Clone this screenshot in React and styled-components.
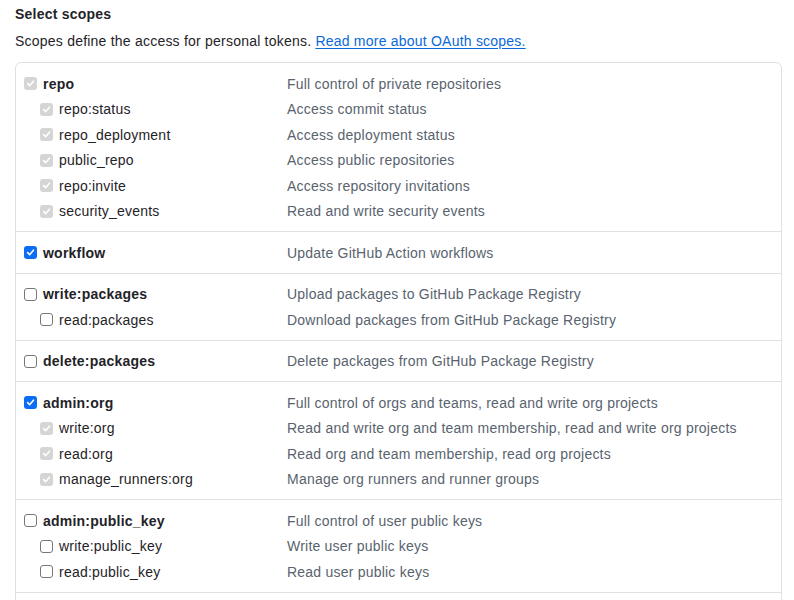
import React from "react";
import styled, { createGlobalStyle } from "styled-components";

const scopes = [
  {
    name: "repo",
    desc: "Full control of private repositories",
    state: "disabled",
    children: [
      ["repo:status", "Access commit status"],
      ["repo_deployment", "Access deployment status"],
      ["public_repo", "Access public repositories"],
      ["repo:invite", "Access repository invitations"],
      ["security_events", "Read and write security events"],
    ],
    childState: "disabled",
  },
  { name: "workflow", desc: "Update GitHub Action workflows", state: "checked", children: [] },
  {
    name: "write:packages",
    desc: "Upload packages to GitHub Package Registry",
    state: "off",
    children: [["read:packages", "Download packages from GitHub Package Registry"]],
    childState: "off",
  },
  { name: "delete:packages", desc: "Delete packages from GitHub Package Registry", state: "off", children: [] },
  {
    name: "admin:org",
    desc: "Full control of orgs and teams, read and write org projects",
    state: "checked",
    children: [
      ["write:org", "Read and write org and team membership, read and write org projects"],
      ["read:org", "Read org and team membership, read org projects"],
      ["manage_runners:org", "Manage org runners and runner groups"],
    ],
    childState: "disabled",
  },
  {
    name: "admin:public_key",
    desc: "Full control of user public keys",
    state: "off",
    children: [
      ["write:public_key", "Write user public keys"],
      ["read:public_key", "Read user public keys"],
    ],
    childState: "off",
  },
];

function Check({ state }) {
  return (
    <Box $state={state}>
      {state !== "off" && (
        <svg width="9" height="9" viewBox="0 0 10 10">
          <path d="M1.8 5.2 L4 7.4 L8.3 2.4" fill="none" stroke="#fff" strokeWidth="1.8" strokeLinecap="round" strokeLinejoin="round" />
        </svg>
      )}
    </Box>
  );
}

export default function App() {
  return (
    <Page>
      <GlobalStyle />
      <Heading>Select scopes</Heading>
      <Intro>
        Scopes define the access for personal tokens. <Link href="#">Read more about OAuth scopes.</Link>
      </Intro>
      <Table>
        {scopes.map((s) => (
          <Group key={s.name}>
            <Row>
              <Name $top>
                <Check state={s.state} />
                {s.name}
              </Name>
              <Desc>{s.desc}</Desc>
            </Row>
            {s.children.map(([n, d]) => (
              <Row key={n}>
                <Name $child>
                  <Check state={s.childState} />
                  {n}
                </Name>
                <Desc>{d}</Desc>
              </Row>
            ))}
          </Group>
        ))}
        {/* next group continues below the fold */}
        <Group />
      </Table>
    </Page>
  );
}

const GlobalStyle = createGlobalStyle`
  body {
    margin: 0;
    background: #fff;
    font-family: "Liberation Sans", Arial, sans-serif;
    font-size: 14px;
    letter-spacing: 0.22px;
    color: #1f2328;
  }
`;

const Page = styled.div`
  padding: 4px 12px 0 15px;
  height: 600px;
  overflow: hidden;
  box-sizing: border-box;
`;

const Heading = styled.div`
  font-weight: 700;
  font-size: 14px;
  line-height: 21px;
  margin-bottom: 6px;
`;

const Intro = styled.div`
  line-height: 21px;
  color: #1f2328;
  margin-bottom: 10px;
`;

const Link = styled.a`
  color: #0969da;
  text-decoration: underline;
  text-underline-offset: 2px;
`;

const Table = styled.div`
  border: 1px solid #dde1e6;
  border-radius: 6px;
`;

const Group = styled.div`
  padding: 7.5px 0;
  min-height: 20px;
  & + & {
    border-top: 1px solid #dde1e6;
  }
`;

const Row = styled.div`
  display: grid;
  grid-template-columns: 271px 1fr;
  box-sizing: border-box;
  height: 25.5px;
  align-items: center;
  padding-top: 1px;
`;

const Name = styled.div`
  display: flex;
  align-items: center;
  padding-left: ${(p) => (p.$child ? 24 : 8)}px;
  font-weight: ${(p) => (p.$top ? 700 : 400)};
  color: #1f2328;
`;

const Desc = styled.div`
  color: #59636e;
`;

const Box = styled.span`
  display: inline-flex;
  align-items: center;
  justify-content: center;
  width: 13px;
  height: 13px;
  margin-right: 6px;
  box-sizing: border-box;
  border-radius: 3px;
  background: ${(p) => (p.$state === "checked" ? "#0b6cf4" : p.$state === "disabled" ? "#d5d5d5" : "#fff")};
  border: ${(p) => (p.$state === "off" ? "1px solid #777" : "none")};
`;
